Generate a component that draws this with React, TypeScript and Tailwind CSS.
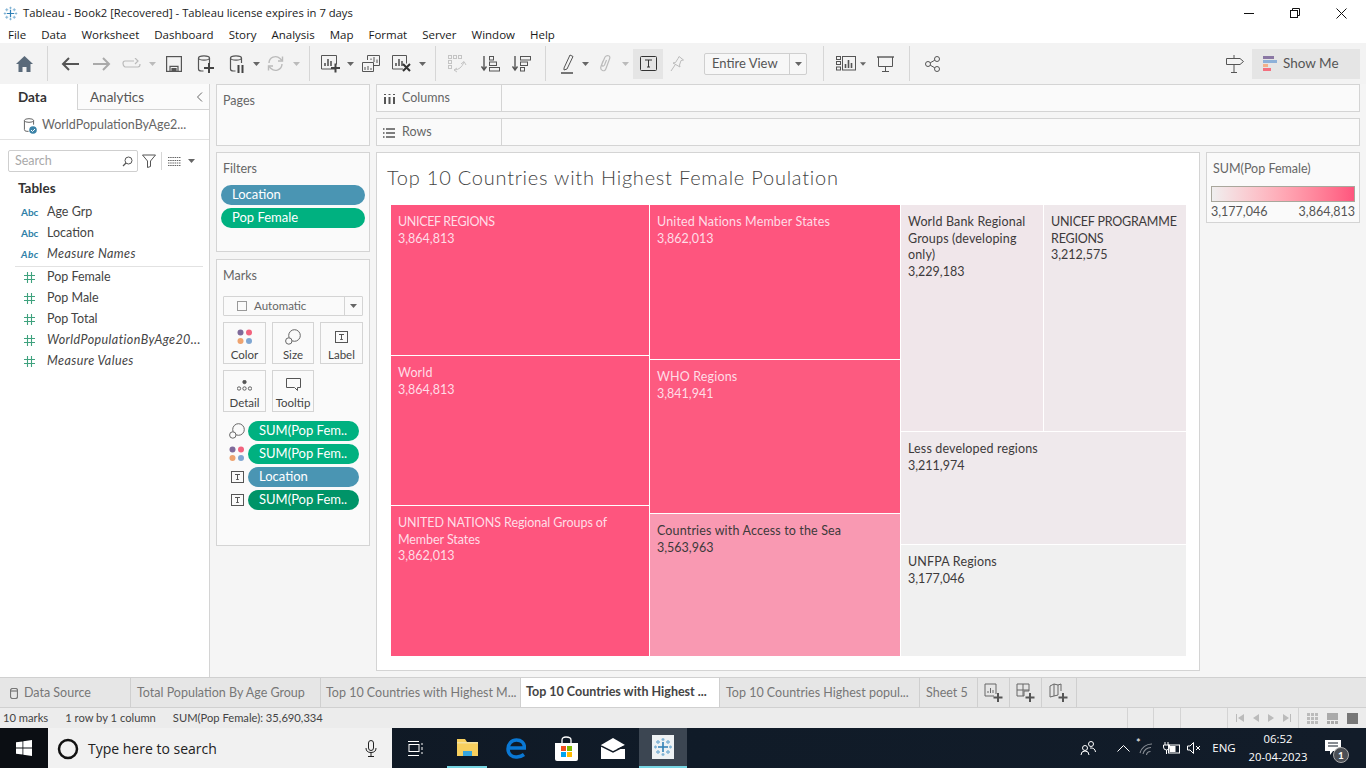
import React from "react";

const S = ({ w = 20, h = 20, vb, children, className = "" }: { w?: number; h?: number; vb?: string; children: React.ReactNode; className?: string }) => (
  <svg width={w} height={h} viewBox={vb ?? `0 0 ${w} ${h}`} fill="none" stroke="currentColor" strokeWidth={1.2} className={className}>
    {children}
  </svg>
);

const Caret = ({ c = "text-[#666]" }: { c?: string }) => (
  <svg width="7" height="4" viewBox="0 0 7 4" className={c}><path d="M0 0h7L3.500 4z" fill="currentColor" /></svg>
);

const Plus = ({ x, y }: { x: number; y: number }) => (
  <path d={`M${x} ${y - 4.5}v9M${x - 4.5} ${y}h9`} stroke="#444" strokeWidth={2} />
);

const Slot = ({ className, children }: { className: string; children?: React.ReactNode }) => (
  <div className={`flex items-center justify-center h-full shrink-0 ${className}`}>{children}</div>
);

const Sep = ({ className }: { className: string }) => <div className={`w-px h-[35px] bg-[#d6d6d6] shrink-0 ${className}`} />;

const Db = ({ w = 14, h = 18 }: { w?: number; h?: number }) => (
  <S w={w} h={h} vb="0 0 14 18">
    <ellipse cx="7" cy="3" rx="5.5" ry="2.2" />
    <path d="M1.5 3v11q0 2 3 2h2M12.5 3v5" />
  </S>
);

const TableauLogo = ({ size = 16, c1 = "#2f7fb5", c2 = "#7fb3d5" }: { size?: number; c1?: string; c2?: string }) => (
  <svg width={size} height={size} viewBox="0 0 20 20" fill="none" strokeWidth={1.3}>
    <path d="M10 5v10M5 10h10" stroke={c1} strokeWidth={1.6} />
    <path d="M10 1v3M8.500 2.500h3M10 16v3M8.500 17.500h3M1 10h3M2.500 8.500v3M16 10h3M17.500 8.500v3" stroke={c2} />
    <path d="M5 3v4M3 5h4M15 3v4M13 5h4M5 13v4M3 15h4M15 13v4M13 15h4" stroke={c2} />
  </svg>
);

const ColorDots = () => (
  <svg width="16" height="16" viewBox="0 0 16 16">
    <circle cx="3.500" cy="3.500" r="3" fill="#7f6a9a" />
    <circle cx="12" cy="3.500" r="3" fill="#f2637e" />
    <circle cx="3.500" cy="12" r="3" fill="#eea36f" />
    <circle cx="12" cy="12" r="3" fill="#7fa6d2" />
  </svg>
);

const SizeIcon = () => (
  <svg width="16" height="16" viewBox="0 0 16 16" fill="none" stroke="#666" strokeWidth={1}>
    <circle cx="9.500" cy="6.500" r="5.800" />
    <circle cx="3.800" cy="12" r="3.200" fill="#fafafa" />
  </svg>
);

const TBox = ({ w = 13, h = 12 }: { w?: number; h?: number }) => (
  <svg width={w} height={h} viewBox="0 0 13 12" fill="none" stroke="#555" strokeWidth={1}>
    <rect x="0.5" y="0.5" width="12" height="11" />
    <path d="M4 3.500h5M6.500 3.500v5M5.200 8.500h2.600" />
  </svg>
);

const Hash = () => (
  <svg width="11" height="11" viewBox="0 0 11 11" stroke="#3fa27e" strokeWidth={1.1}>
    <path d="M3.500 0v11M7.500 0v11M0 3.500h11M0 7.500h11" />
  </svg>
);

const Abc = () => <span className="w-[29px] pl-[3px] text-[10px] text-[#2f7fa8] font-bold shrink-0">Abc</span>;

const Field = ({ label, italic, kind }: { label: string; italic?: boolean; kind: "a" | "n" }) => (
  <div className={`flex items-center h-[21px] pl-[18px] text-[12.5px] text-[#444] whitespace-nowrap ${italic ? "italic tracking-[0.42px]" : ""}`}>
    {kind === "a" ? <Abc /> : <span className="w-[29px] pl-[6px] shrink-0 flex"><Hash /></span>}
    <span>{label}</span>
  </div>
);

const Panel = ({ className, title, children }: { className: string; title: string; children?: React.ReactNode }) => (
  <div className={`border border-[#d4d4d4] bg-[#fafafa] shrink-0 ${className}`}>
    <div className="pl-[6px] pt-[7px] text-[12.5px] leading-[17px] text-[#666]">{title}</div>
    {children}
  </div>
);

const MarkBtn = ({ label, icon }: { label: string; icon: React.ReactNode }) => (
  <div className="h-[42px] border border-[#d4d4d4] flex flex-col items-center justify-between pt-[6px] pb-[1px] text-[11.5px] text-[#444] leading-[14px] bg-[#fafafa]">
    <div className="h-[16px] flex items-center justify-center">{icon}</div>
    <span>{label}</span>
  </div>
);

const Pill = ({ text, bg, icon }: { text: string; bg: string; icon: React.ReactNode }) => (
  <div className="flex items-center h-[20px]">
    <div className="w-[31px] pl-[9px] flex justify-center">{icon}</div>
    <div className={`w-[111px] h-[20px] rounded-full ${bg} text-white text-[13px] leading-[19px] pl-[11px] whitespace-nowrap overflow-hidden`}>{text}</div>
  </div>
);

const Cell = ({ className, lines, value, light, track = "tracking-[0.15px]" }: { className: string; lines: string[]; value: string; light?: boolean; track?: string }) => (
  <div className={`pl-[7px] pt-[9px] text-[12.5px] leading-[16.7px] ${light ? "text-[#ffdde6]" : "text-[#3d3a3b]"} ${className}`}>
    {lines.map((l) => (
      <div key={l} className={`whitespace-nowrap ${track}`}>{l}</div>
    ))}
    <div>{value}</div>
  </div>
);

const Tab = ({ className, children }: { className: string; children: React.ReactNode }) => (
  <div className={`h-full flex items-center shrink-0 border-r border-[#cfcfcf] text-[12.5px] text-[#777] whitespace-nowrap ${className}`}>{children}</div>
);

const TabAdd = ({ children, className }: { children: React.ReactNode; className: string }) => (
  <Tab className={`justify-center ${className}`}>
    <svg width="20" height="20" viewBox="0 0 20 20" fill="none" stroke="#666" strokeWidth={1}>
      {children}
      <path d="M14 10v9M9.500 14.500h9" stroke="#555" strokeWidth={2} />
    </svg>
  </Tab>
);

const menus = ["File", "Data", "Worksheet", "Dashboard", "Story", "Analysis", "Map", "Format", "Server", "Window", "Help"];

export default function App() {
  return (
    <div className="w-[1366px] h-[768px] overflow-hidden flex flex-col bg-[#f5f5f5] [font-family:Lato,sans-serif]">
      {/* Title bar */}
      <div className="h-[26px] bg-white flex items-center shrink-0 [font-family:'Open_Sans',sans-serif] text-[11.25px] text-[#1a1a1a]">
        <div className="w-[23px] pl-[3px] flex"><TableauLogo size={15} /></div>
        <span className="whitespace-nowrap">Tableau - Book2 [Recovered] - Tableau license expires in 7 days</span>
        <div className="ml-auto mr-[2px] flex items-center text-black">
          <Slot className="w-[46px] h-[26px]"><svg width="10" height="1"><rect width="10" height="1" fill="#111" /></svg></Slot>
          <Slot className="w-[46px] h-[26px]">
            <svg width="10" height="10" viewBox="0 0 10 10" fill="none" stroke="#111"><rect x="0.5" y="2.5" width="7" height="7" /><path d="M2.500 2.500v-2h7v7h-2" /></svg>
          </Slot>
          <Slot className="w-[46px] h-[26px]">
            <svg width="11" height="11" viewBox="0 0 11 11" stroke="#111"><path d="M.5.5l10 10M10.500.5l-10 10" /></svg>
          </Slot>
        </div>
      </div>
      {/* Menu */}
      <div className="h-[17px] bg-white flex items-center gap-[15px] pl-[8px] shrink-0 [font-family:'Open_Sans',sans-serif] text-[11.5px] text-[#1a1a1a]">
        {menus.map((m) => (
          <span key={m}>{m}</span>
        ))}
      </div>
      {/* Toolbar */}
      <div className="h-[41px] bg-[#f3f3f3] flex items-center pl-[8px] shrink-0 text-[#555]">
        <Slot className="w-[32px]">
          <svg width="17" height="16" viewBox="0 0 17 16"><path d="M8.500 0L17 8h-2.500v8H10.500v-5h-4v5H2.500V8H0z" fill="#5a6a7a" /></svg>
        </Slot>
        <Sep className="ml-[7px]" />
        <Slot className="w-[32px] ml-[6px]">
          <S w={18} h={14} className="text-[#555]"><path d="M18 7H2M8 1L2 7l6 6" strokeWidth={2} /></S>
        </Slot>
        <Slot className="w-[32px]">
          <S w={18} h={14} className="text-[#aaa]"><path d="M0 7h16M10 1l6 6-6 6" strokeWidth={2} /></S>
        </Slot>
        <Slot className="w-[26px]">
          <S w={19} h={12} className="text-[#bbb]"><path d="M12 3H3Q1 3 1 5.500T3 9h13q2 0 2-3M13 0l3 3-3 3" /></S>
        </Slot>
        <Slot className="w-[16px]"><Caret c="text-[#bbb]" /></Slot>
        <Slot className="w-[28px]">
          <S w={16} h={16} className="text-[#555]"><rect x=".6" y=".6" width="14.800" height="14.800" /><path d="M4 15.400v-5h8v5" /><path d="M6 12.500h4v3H6z" fill="currentColor" /></S>
        </Slot>
        <Slot className="w-[34px]">
          <div className="relative w-[17px] h-[18px]"><Db /><svg width="10" height="10" className="absolute right-0 bottom-0"><path d="M5 0v10M0 5h10" stroke="#444" strokeWidth={2} /></svg></div>
        </Slot>
        <Slot className="w-[28px]">
          <div className="relative w-[15px] h-[18px]"><Db /><svg width="7" height="8" className="absolute right-0 bottom-0"><path d="M1.500 0v8M5.500 0v8" stroke="#444" strokeWidth={2} /></svg></div>
        </Slot>
        <Slot className="w-[12px]"><Caret /></Slot>
        <Slot className="w-[26px]">
          <S w={17} h={17} className="text-[#bbb]"><path d="M2 8a6.500 6.500 0 0 1 11-4.500l2 2M15 9a6.500 6.500 0 0 1-11 4.500l-2-2" strokeWidth={1.400} /><path d="M15.500 1.500v4.500h-4.500M1.500 15.500V11h4.500" strokeWidth={1.400} /></S>
        </Slot>
        <Slot className="w-[16px]"><Caret c="text-[#bbb]" /></Slot>
        <Sep className="ml-[5px]" />
        <Slot className="w-[30px] ml-[6px]">
          <svg width="20" height="18" viewBox="0 0 20 18" fill="none" stroke="#555" strokeWidth={1}>
            <path d="M14 14H.5V.5h15v9" />
            <path d="M4 11V8M7 11V4M10 11V6" strokeWidth={1.600} />
            <Plus x={14.500} y={13} />
          </svg>
        </Slot>
        <Slot className="w-[8px]"><Caret /></Slot>
        <Slot className="w-[34px]">
          <svg width="18" height="18" viewBox="0 0 18 18" fill="none" stroke="#555" strokeWidth={1}>
            <path d="M5.500 5V.5h12v10H12" />
            <path d="M.5 7.500h11v9H.5z" fill="#f3f3f3" />
            <path d="M9 5V3.500M12 7V2M15 8V4.500M3 15v-3M6 15v-4M9 15v-2" />
          </svg>
        </Slot>
        <Slot className="w-[28px]">
          <svg width="20" height="18" viewBox="0 0 20 18" fill="none" stroke="#555" strokeWidth={1}>
            <path d="M11 14H.5V.5h14v8" />
            <path d="M4 11V8M7 11V4M10 11V6" strokeWidth={1.600} />
            <path d="M11 9l7 7M18 9l-7 7" stroke="#333" strokeWidth={2} />
          </svg>
        </Slot>
        <Slot className="w-[12px]"><Caret /></Slot>
        <Sep className="ml-[7px]" />
        <Slot className="w-[42px]">
          <svg width="19" height="18" viewBox="0 0 19 18" fill="none" stroke="#c4c4c4" strokeWidth={1}>
            <rect x=".5" y=".5" width="3" height="3" /><rect x="5.500" y=".5" width="3" height="3" /><rect x="10.500" y=".5" width="3" height="3" />
            <rect x=".5" y="5.500" width="3" height="3" /><rect x=".5" y="10.500" width="3" height="3" />
            <path d="M6 15q7 0 10-8M13 9l3-2.500L18 10M6 15l3-2M6 15l3 2" />
          </svg>
        </Slot>
        <Slot className="w-[24px]">
          <svg width="19" height="16" viewBox="0 0 19 16" fill="none" stroke="#555" strokeWidth={1}>
            <path d="M3 0v13M.5 10.500L3 14l2.500-3.500" strokeWidth={1.400} />
            <rect x="8.500" y=".5" width="4" height="3.500" /><rect x="8.500" y="6" width="7" height="3.500" /><rect x="8.500" y="11.500" width="10" height="3.500" />
          </svg>
        </Slot>
        <Slot className="w-[38px]">
          <svg width="19" height="16" viewBox="0 0 19 16" fill="none" stroke="#555" strokeWidth={1}>
            <path d="M3 0v13M.5 10.500L3 14l2.500-3.500" strokeWidth={1.400} />
            <rect x="8.500" y=".5" width="10" height="3.500" /><rect x="8.500" y="6" width="7" height="3.500" /><rect x="8.500" y="11.500" width="4" height="3.500" />
          </svg>
        </Slot>
        <Sep className="ml-[5px]" />
        <Slot className="w-[24px] ml-[10px]">
          <svg width="14" height="20" viewBox="0 0 14 20" fill="none" stroke="#555" strokeWidth={1}>
            <path d="M3 14L9 1l3 1.500L6 15l-3 1z" />
            <path d="M0 19h12" strokeWidth={1.600} />
          </svg>
        </Slot>
        <Slot className="w-[10px]"><Caret /></Slot>
        <Slot className="w-[30px]">
          <svg width="12" height="17" viewBox="0 0 12 17" fill="none" stroke="#bbb" strokeWidth={1.200}>
            <path d="M4 6L2 11.500q-1 3 1.500 4t3.500-2L10.500 4q1-2.500-1-3.200T6 2L3 9q-.5 1.500.5 2t2-1l2-5" />
          </svg>
        </Slot>
        <Slot className="w-[10px]"><Caret c="text-[#bbb]" /></Slot>
        <Slot className="w-[30px] ml-[3px] bg-[#e5e5e5] !h-[30px]">
          <svg width="17" height="15" viewBox="0 0 17 15" fill="none" stroke="#333" strokeWidth={1}>
            <rect x=".5" y=".5" width="16" height="14" rx="1" /><path d="M5 4h7M8.500 4v7M7 11h3" />
          </svg>
        </Slot>
        <Slot className="w-[28px]">
          <svg width="14" height="16" viewBox="0 0 14 16" fill="none" stroke="#bbb" strokeWidth={1}>
            <path d="M9 .5l4.500 3.500-2.500.5-1.500 4.500L10 11 3 7l2.500-.5L8 2.500z" />
            <path d="M5 9l-4 6" />
          </svg>
        </Slot>
        <div className="ml-[13px] w-[103px] h-[22px] border border-[#cfcfcf] rounded-[2px] flex shrink-0 bg-[#f7f7f7]">
          <div className="w-[85px] border-r border-[#cfcfcf] pl-[7px] text-[13px] leading-[19px] text-[#555]">Entire View</div>
          <div className="flex-1 flex items-center justify-center"><Caret /></div>
        </div>
        <Sep className="ml-[16px]" />
        <Slot className="w-[28px] ml-[8px]">
          <svg width="20" height="15" viewBox="0 0 20 15" fill="none" stroke="#555" strokeWidth={1}>
            <rect x=".5" y=".5" width="4" height="3" /><rect x=".5" y="5.500" width="4" height="3" /><rect x=".5" y="11" width="4" height="3" />
            <rect x="6.500" y=".5" width="13" height="13.500" />
            <path d="M9.500 12V8M12.500 12V4M15.500 12V7" strokeWidth={1.600} />
          </svg>
        </Slot>
        <Slot className="w-[6px]"><Caret /></Slot>
        <Slot className="w-[38px]">
          <svg width="17" height="16" viewBox="0 0 17 16" fill="none" stroke="#555" strokeWidth={1}>
            <path d="M0 1h17" strokeWidth={1.400} /><path d="M1.500 1v9.500h14V1M8.500 10.500V15M5 15.500h7" />
          </svg>
        </Slot>
        <Sep className="ml-[5px]" />
        <Slot className="w-[32px] ml-[6px]">
          <svg width="15" height="16" viewBox="0 0 15 16" fill="none" stroke="#555" strokeWidth={1}>
            <circle cx="3" cy="8" r="2.500" /><circle cx="12" cy="3" r="2.500" /><circle cx="12" cy="13" r="2.500" />
            <path d="M5.200 6.800l4.600-2.600M5.200 9.200l4.600 2.600" />
          </svg>
        </Slot>
        <Slot className="w-[32px] ml-auto">
          <svg width="18" height="18" viewBox="0 0 18 18" fill="none" stroke="#555" strokeWidth={1}>
            <path d="M.5 3.500h13.500l3.500 3-3.500 3H.5zM8 0v3.500M8 9.500V17M5 17.500h6" />
          </svg>
        </Slot>
        <div className="w-[108px] h-[30px] ml-px mr-[6px] bg-[#e5e5e5] flex items-center pl-[11px] shrink-0 text-[13.5px] text-[#555]">
          <svg width="14" height="15" viewBox="0 0 14 15" className="mr-[6px]">
            <rect width="11" height="3" fill="#8a77a3" /><rect y="4" width="14" height="3" fill="#8db0d8" /><rect y="8" width="5" height="3" fill="#f2b089" /><rect y="12" width="8" height="3" fill="#f4707f" />
          </svg>
          Show Me
        </div>
      </div>
      {/* Main */}
      <div className="h-[593px] flex shrink-0">
        {/* Left data pane */}
        <div className="w-[210px] shrink-0 bg-white border-r border-[#d4d4d4] flex flex-col">
          <div className="h-[26px] flex shrink-0">
            <div className="w-[77px] pl-[18px] text-[13.5px] font-bold text-[#333] leading-[27px]">Data</div>
            <div className="flex-1 border-l border-b border-[#d4d4d4] pl-[12px] text-[13.5px] text-[#555] leading-[26px] flex items-center justify-between pr-[6px] bg-[#fbfbfb]">
              Analytics
              <svg width="7" height="10" viewBox="0 0 7 10" fill="none" stroke="#666"><path d="M6 .5L1.500 5 6 9.500" /></svg>
            </div>
          </div>
          <div className="h-[30px] flex items-center pl-[23px] pt-[2px] border-b border-[#e2e2e2] shrink-0 text-[12.5px] text-[#666]">
            <div className="relative w-[19px] h-[16px] text-[#666]">
              <S w={12} h={15} vb="0 0 14 18"><ellipse cx="7" cy="3" rx="5.500" ry="2.200" /><path d="M1.500 3v11q0 2 3 2h2M12.500 3v5" /></S>
              <svg width="8" height="8" viewBox="0 0 8 8" className="absolute left-[6px] bottom-0"><circle cx="4" cy="4" r="3.800" fill="#3b83a8" /><path d="M2 4l1.500 1.500L6 3" stroke="#fff" fill="none" /></svg>
            </div>
            <span className="whitespace-nowrap">WorldPopulationByAge2...</span>
          </div>
          <div className="h-[22px] mt-[10px] flex items-center shrink-0 pl-[8px]">
            <div className="w-[130px] h-[22px] border border-[#cfcfcf] rounded-[2px] flex items-center justify-between pl-[6px] pr-[4px] text-[12.5px] text-[#a9a9a9]">
              Search
              <svg width="11" height="11" viewBox="0 0 11 11" fill="none" stroke="#555"><circle cx="6.500" cy="4.500" r="3.500" /><path d="M4 7L1 10" strokeWidth={1.300} /></svg>
            </div>
            <svg width="14" height="14" viewBox="0 0 14 14" fill="none" stroke="#555" className="ml-[4px]"><path d="M.5 1h13L8.500 7v5.500l-3 1V7z" /></svg>
            <div className="w-px h-[18px] bg-[#d6d6d6] ml-[5px]" />
            <svg width="13" height="9" viewBox="0 0 13 9" stroke="#666" strokeDasharray="1.500 .7" className="ml-[6px]"><path d="M0 .5h13M0 3.500h13M0 6h13M0 8.500h13" /></svg>
            <div className="ml-[7px] flex"><Caret /></div>
          </div>
          <div className="mt-[7px] pl-[18px] text-[13.5px] font-bold text-[#333] leading-[18px]">Tables</div>
          <div className="mt-[5px]">
            <Field kind="a" label="Age Grp" />
            <Field kind="a" label="Location" />
            <Field kind="a" label="Measure Names" italic />
            <div className="h-px bg-[#e2e2e2] ml-[15px] mr-[6px] mt-[1px]" />
            <Field kind="n" label="Pop Female" />
            <Field kind="n" label="Pop Male" />
            <Field kind="n" label="Pop Total" />
            <Field kind="n" label="WorldPopulationByAge20..." italic />
            <Field kind="n" label="Measure Values" italic />
          </div>
        </div>
        {/* Shelves column */}
        <div className="w-[154px] ml-[6px] shrink-0 flex flex-col">
          <Panel className="h-[62px]" title="Pages" />
          <Panel className="h-[100px] mt-[6px]" title="Filters">
            <div className="mt-[8px] ml-[4px] flex flex-col gap-[3px]">
              <div className="w-[144px] h-[20px] rounded-full bg-[#4a95b3] text-white text-[13px] leading-[19px] pl-[11px]">Location</div>
              <div className="w-[144px] h-[20px] rounded-full bg-[#00b180] text-white text-[13px] leading-[19px] pl-[11px]">Pop Female</div>
            </div>
          </Panel>
          <Panel className="h-[287px] mt-[7px]" title="Marks">
            <div className="mt-[12px] ml-[6px] w-[140px] h-[20px] border border-[#d4d4d4] rounded-[1px] flex text-[11.5px] text-[#666]">
              <div className="flex-1 flex items-center border-r border-[#d4d4d4] pl-[13px]">
                <div className="w-[10px] h-[10px] border border-[#999] mr-[7px]" />
                Automatic
              </div>
              <div className="w-[17px] flex items-center justify-center"><Caret /></div>
            </div>
            <div className="mt-[6px] ml-[6px] grid grid-cols-[43px_42px_43px] gap-x-[6px] gap-y-[6px] w-[140px]">
              <MarkBtn label="Color" icon={<ColorDots />} />
              <MarkBtn label="Size" icon={<SizeIcon />} />
              <MarkBtn label="Label" icon={<TBox />} />
              <MarkBtn
                label="Detail"
                icon={
                  <svg width="15" height="11" viewBox="0 0 15 11" fill="none" stroke="#555" strokeWidth={0.9}>
                    <circle cx="7.500" cy="2" r="1.700" fill="#555" /><circle cx="2" cy="8.500" r="1.700" /><circle cx="7.500" cy="8.500" r="1.700" /><circle cx="13" cy="8.500" r="1.700" />
                  </svg>
                }
              />
              <MarkBtn
                label="Tooltip"
                icon={
                  <svg width="15" height="14" viewBox="0 0 15 14" fill="none" stroke="#555" strokeWidth={1}><path d="M.5.5h14v9h-3v3l-3-3H.5z" /></svg>
                }
              />
            </div>
            <div className="mt-[9px] flex flex-col gap-[3px]">
              <Pill text="SUM(Pop Fem.." bg="bg-[#00b180]" icon={<SizeIcon />} />
              <Pill text="SUM(Pop Fem.." bg="bg-[#00b180]" icon={<ColorDots />} />
              <Pill text="Location" bg="bg-[#4a95b3]" icon={<TBox />} />
              <Pill text="SUM(Pop Fem.." bg="bg-[#009468]" icon={<TBox />} />
            </div>
          </Panel>
        </div>
        {/* Viz column */}
        <div className="flex-1 ml-[6px] mr-[6px] flex flex-col min-w-0">
          <div className="h-[28px] flex border border-[#d4d4d4] bg-[#fafafa] shrink-0">
            <div className="w-[125px] border-r border-[#d4d4d4] flex items-center pl-[7px] pt-[1px] gap-[7px] text-[12.5px] text-[#666]">
              <svg width="11" height="10" viewBox="0 0 11 10" stroke="#555" strokeWidth={2}><path d="M1 0v1M5.500 0v1M10 0v1M1 3v7M5.500 3v7M10 3v7" /></svg>
              Columns
            </div>
          </div>
          <div className="h-[28px] mt-[6px] flex border border-[#d4d4d4] bg-[#fafafa] shrink-0">
            <div className="w-[125px] border-r border-[#d4d4d4] flex items-center pl-[6px] pt-[1px] gap-[7px] text-[12.5px] text-[#666]">
              <svg width="12" height="10" viewBox="0 0 12 10" stroke="#555" strokeWidth={1.500}><path d="M0 1h1.500M3 1h9M0 5h1.500M3 5h9M0 9h1.500M3 9h9" /></svg>
              Rows
            </div>
          </div>
          <div className="mt-[6px] flex items-start gap-[6px]">
            <div className="w-[824px] h-[519px] border border-[#d4d4d4] bg-white shrink-0 pl-[14px]">
              <div className="h-[52px] -ml-[4px] text-[20px] font-light leading-[49px] text-[#444] tracking-[0.77px] whitespace-nowrap">Top 10 Countries with Highest Female Poulation</div>
              <div className="flex gap-px h-[451px] w-[795px]">
                <div className="w-[258px] flex flex-col gap-px">
                  <Cell className="h-[150px] bg-[#fe557e]" light track="tracking-[-0.35px]" lines={["UNICEF REGIONS"]} value="3,864,813" />
                  <Cell className="h-[149px] bg-[#fe557e]" light lines={["World"]} value="3,864,813" />
                  <Cell className="h-[150px] bg-[#fe557e]" light track="tracking-[-0.07px]" lines={["UNITED NATIONS Regional Groups of", "Member States"]} value="3,862,013" />
                </div>
                <div className="w-[250px] flex flex-col gap-px">
                  <Cell className="h-[154px] bg-[#fe557e]" light lines={["United Nations Member States"]} value="3,862,013" />
                  <Cell className="h-[153px] bg-[#fd5a80]" light lines={["WHO Regions"]} value="3,841,941" />
                  <Cell className="h-[142px] bg-[#f999b2]" lines={["Countries with Access to the Sea"]} value="3,563,963" />
                </div>
                <div className="w-[285px] flex flex-col gap-px">
                  <div className="h-[226px] flex gap-px">
                    <Cell className="w-[142px] bg-[#f0e6ea]" lines={["World Bank Regional", "Groups (developing", "only)"]} value="3,229,183" />
                    <Cell className="w-[142px] bg-[#efe8eb]" track="tracking-[-0.2px]" lines={["UNICEF PROGRAMME", "REGIONS"]} value="3,212,575" />
                  </div>
                  <Cell className="h-[112px] bg-[#efe9ec]" lines={["Less developed regions"]} value="3,211,974" />
                  <Cell className="h-[111px] bg-[#f0f0f0]" lines={["UNFPA Regions"]} value="3,177,046" />
                </div>
              </div>
            </div>
            <div className="w-[154px] h-[71px] border border-[#d4d4d4] bg-[#fafafa] shrink-0">
              <div className="pl-[6px] pt-[7px] text-[12.5px] leading-[17px] text-[#666]">SUM(Pop Female)</div>
              <div className="ml-[4px] mt-[9px] w-[144px] h-[16px] border border-[#a9a79c] bg-gradient-to-r from-[#efefef] to-[#fe557e]" />
              <div className="mx-[4px] mt-px flex justify-between text-[12.5px] leading-[17px] text-[#555]">
                <span>3,177,046</span>
                <span>3,864,813</span>
              </div>
            </div>
          </div>
        </div>
      </div>
      {/* Tabs */}
      <div className="h-[31px] shrink-0 bg-[#e6e6e6] border-t border-b border-[#d0d0d0] flex">
        <Tab className="w-[131px] pl-[10px] pt-[1px] gap-[6px]">
          <S w={8} h={11} vb="0 0 8 11" className="text-[#777]"><rect x=".5" y=".5" width="7" height="10" rx="2" /><path d="M.5 3h7" /></S>
          Data Source
        </Tab>
        <Tab className="w-[190px] pl-[6px] pt-[1px]">Total Population By Age Group</Tab>
        <Tab className="w-[200px] pl-[5px] pt-[1px]">Top 10 Countries with Highest M...</Tab>
        <Tab className="w-[199px] pl-[5px] bg-white !text-[#444] font-bold">Top 10 Countries with Highest ...</Tab>
        <Tab className="w-[200px] pl-[6px] pt-[1px]">Top 10 Countries Highest popul...</Tab>
        <Tab className="w-[58px] pl-[6px] pt-[1px]">Sheet 5</Tab>
        <TabAdd className="w-[32px]"><path d="M12 11V1H1v12h9" /><path d="M4 10V8M6.500 10V5M9 10V7" /></TabAdd>
        <TabAdd className="w-[32px]"><path d="M1 1h12v7H8v5H1zM1 7h12M7 1v12" /></TabAdd>
        <TabAdd className="w-[35px]"><path d="M9 12V2L5 1 1 3v11l4-1zM5 1v12M9 2l3-1v7" /></TabAdd>
      </div>
      {/* Status */}
      <div className="h-[20px] shrink-0 bg-[#ececec] flex items-center text-[11.2px] text-[#444] whitespace-nowrap">
        <span className="ml-[3px]">10 marks</span>
        <span className="ml-[17px]">1 row by 1 column</span>
        <span className="ml-[17px]">SUM(Pop Female): 35,690,334</span>
        <div className="ml-auto flex h-full">
          {["w-[26px]", "w-[27px]", "w-[47px]"].map((c) => (
            <div key={c} className={`${c} border-l border-[#d4d4d4]`} />
          ))}
          <div className="w-[71px] border-l border-[#d4d4d4] flex items-center justify-center gap-[9px]">
            <svg width="8" height="8" viewBox="0 0 8 8" fill="#bbb"><path d="M8 0v8L2 4zM0 0h1v8H0z" /></svg>
            <svg width="6" height="8" viewBox="0 0 6 8" fill="#bbb"><path d="M6 0v8L0 4z" /></svg>
            <svg width="6" height="8" viewBox="0 0 6 8" fill="#bbb"><path d="M0 0v8l6-4z" /></svg>
            <svg width="8" height="8" viewBox="0 0 8 8" fill="#bbb"><path d="M0 0v8l6-4zM7 0h1v8H7z" /></svg>
          </div>
          <div className="w-[68px] border-l border-[#d4d4d4] flex items-center pl-[8px] gap-[9px] pr-[2px]">
            <svg width="11" height="11" viewBox="0 0 11 11" fill="#bbb"><path d="M0 0h3v3H0zM4 0h3v3H4zM8 0h3v3H8zM0 4h3v3H0zM4 4h3v3H4zM8 4h3v3H8zM0 8h3v3H0zM4 8h3v3H4zM8 8h3v3H8z" /></svg>
            <svg width="11" height="11" viewBox="0 0 11 11" fill="#aaa"><path d="M0 0h11v7H0zM0 8h3v3H0zM4 8h3v3H4zM8 8h3v3H8z" /></svg>
            <div className="w-[11px] h-[11px] bg-[#777]" />
          </div>
        </div>
      </div>
      {/* Taskbar */}
      <div className="h-[40px] shrink-0 bg-gradient-to-r from-[#0f1722] via-[#101b28] to-[#121c29] flex items-center text-white">
        <div className="w-[48px] h-full bg-[#0b0e13] flex items-center justify-center">
          <svg width="16" height="16" viewBox="0 0 16 16" fill="#fff"><path d="M0 2.300l6.500-.9v6.200H0zM7.300 1.300L16 0v7.600H7.300zM0 8.400h6.500v6.200L0 13.700zM7.300 8.400H16V16l-8.700-1.200z" /></svg>
        </div>
        <div className="w-[344px] h-full bg-[#f1f1f1] flex items-center pl-[9px] pt-[1px] text-[#222] [font-family:'Open_Sans',sans-serif] text-[14px]">
          <svg width="22" height="22" viewBox="0 0 22 22" fill="none" stroke="#111" strokeWidth={2.500} className="mr-[9px]"><circle cx="11" cy="11" r="9" /></svg>
          Type here to search
          <svg width="12" height="17" viewBox="0 0 12 17" fill="none" stroke="#222" strokeWidth={1} className="ml-auto mr-[15px]">
            <rect x="3.500" y=".5" width="5" height="10" rx="2.500" /><path d="M1 8q0 4.500 5 4.500T11 8M6 12.500V16M3 16.500h6" />
          </svg>
        </div>
        <Slot className="w-[48px]">
          <svg width="16" height="15" viewBox="0 0 16 15" fill="none" stroke="#fff" strokeWidth={1}>
            <rect x="1" y="3.500" width="10" height="7" /><path d="M0 .5h11M0 14.500h11M14 2v2M14 6v3M14 11v2" />
          </svg>
        </Slot>
        <Slot className="w-[40px] ml-[7px] border-b-2 border-[#76d5e3]">
          <svg width="23" height="19" viewBox="0 0 23 19">
            <path d="M1 1h8l2 3h11v14H1z" fill="#f7cf5e" /><rect x="1" y="4" width="21" height="1.500" fill="#f3e1a0" /><path d="M7 13h9v5H7z" fill="#37a6de" />
          </svg>
        </Slot>
        <Slot className="w-[58px]">
          <svg width="20" height="21" viewBox="0 0 20 21" fill="none" stroke="#0a78d4" strokeWidth={3.500}>
            <path d="M3.500 10h15C18.500 4.500 15 2 10.500 2 5.500 2 2 6 2 11c0 5.500 4.500 8.500 9 8 3-.2 5-1 7-2.500" />
          </svg>
        </Slot>
        <Slot className="w-[42px]">
          <svg width="23" height="25" viewBox="0 0 23 25">
            <path d="M0 7h23v16a2 2 0 0 1-2 2H2a2 2 0 0 1-2-2z" fill="#fff" />
            <path d="M7 8V4q0-3 4-3 5 0 5 3v4" stroke="#fff" fill="none" strokeWidth={1.300} />
            <rect x="6" y="10" width="5" height="5" fill="#f25022" /><rect x="12" y="10" width="5" height="5" fill="#7fba00" /><rect x="6" y="16" width="5" height="5" fill="#00a4ef" /><rect x="12" y="16" width="5" height="5" fill="#ffb900" />
          </svg>
        </Slot>
        <Slot className="w-[52px]">
          <svg width="24" height="21" viewBox="0 0 24 21"><path d="M0 7L12 0l12 7v14H0z" fill="#fff" /><path d="M0 8l12 6 12-6" stroke="#111a26" strokeWidth={1.500} fill="none" /><path d="M16 11l8-4v4z" fill="#111a26" /></svg>
        </Slot>
        <Slot className="w-[48px] bg-[#3c4652] border-b-2 border-[#76d5e3]">
          <div className="w-[22px] h-[24px] bg-[#eef2f4] flex items-center justify-center"><TableauLogo size={20} /></div>
        </Slot>
        <div className="ml-auto flex items-center h-full">
          <svg width="16" height="16" viewBox="0 0 16 16" fill="none" stroke="#fff" strokeWidth={1} className="mr-[21px]">
            <circle cx="5" cy="8" r="2.500" /><path d="M1 15q0-4 4-4t4 4" /><circle cx="11" cy="4" r="2.500" /><path d="M10 8q5-.5 5.500 4" />
          </svg>
          <svg width="13" height="7" viewBox="0 0 13 7" fill="none" stroke="#fff" strokeWidth={1} className="mr-[8px]"><path d="M.5 6.500l6-6 6 6" /></svg>
          <div className="relative w-[16px] h-[16px] mr-[9px]">
            <svg width="16" height="16" viewBox="0 0 16 16" fill="none" stroke="#8a8f96" strokeWidth={1.100}>
              <path d="M2 13a12 12 0 0 1 12-9M5 14a8 8 0 0 1 8-6.500M8.500 15a4 4 0 0 1 4-3.500" />
            </svg>
            <span className="absolute -left-[2px] -top-[3px] text-[11px] leading-[11px]">*</span>
          </div>
          <svg width="17" height="13" viewBox="0 0 17 13" fill="none" stroke="#fff" strokeWidth={1} className="mr-[7px]">
            <rect x="5.500" y="3" width="11" height="8" /><rect x="7" y="4.500" width="5" height="5" fill="#fff" /><path d="M2 0v3M5 0v3M.5 3h6v2q0 3-3 3t-3-3zM3.500 8v4" />
          </svg>
          <svg width="14" height="12" viewBox="0 0 14 12" fill="none" stroke="#fff" strokeWidth={1} className="mr-[11px]">
            <path d="M.5 4h2.500L6.500.5v11L3 8H.5zM9 4l4 4M13 4l-4 4" />
          </svg>
          <span className="[font-family:'Open_Sans',sans-serif] text-[11.5px] w-[24px] text-center mr-[10px]">ENG</span>
          <div className="w-[64px] flex flex-col items-center text-[11.3px] leading-[18px] [font-family:'Open_Sans',sans-serif]">
            <span>06:52</span>
            <span>20-04-2023</span>
          </div>
          <div className="relative w-[56px] h-[40px] pl-[15px] pt-[12px]">
            <svg width="17" height="15" viewBox="0 0 17 15"><path d="M0 0h16v11h-8l-3 4v-4H0z" fill="#fff" /><path d="M3 3h10M3 6h10" stroke="#111a26" /></svg>
            <span className="absolute left-[23px] top-[19px] w-[16px] h-[16px] rounded-full bg-[#4b4f55] border border-[#aaa] text-[10px] leading-[14px] text-center font-bold">1</span>
          </div>
        </div>
      </div>
    </div>
  );
}
